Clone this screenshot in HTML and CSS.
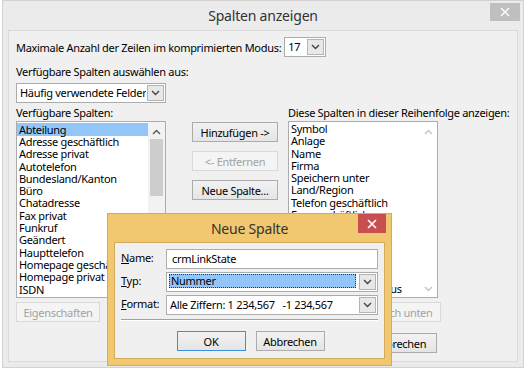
FILE: index.html
```html
<!DOCTYPE html>
<html lang="de">
<head>
    <meta charset="UTF-8">
    <title>Spalten anzeigen</title>
    <link rel="stylesheet" href="styles.css">
</head>
<body>
    <div class="window">
        <div class="titlebar">
            <span class="title">Spalten anzeigen</span>
            <span class="win-close">
                <svg width="10" height="10" viewBox="0 0 10 10"><path d="M1 1L9 9M9 1L1 9" stroke="#fff" stroke-width="1.4"/></svg>
            </span>
        </div>
        <div class="client">
            <div class="row-max">
                <span>Maximale Anzahl der Zeilen im komprimierten Modus:</span>
                <div class="combo combo-small">
                    <span class="combo-text">17</span>
                    <span class="combo-btn"><svg width="9" height="6" viewBox="0 0 9 6"><path d="M1 1l3.5 3.5L8 1" stroke="#444" stroke-width="1.4" fill="none"/></svg></span>
                </div>
            </div>
            <div class="label label-source">Verfügbare Spalten auswählen aus:</div>
            <div class="combo combo-source">
                <span class="combo-text">Häufig verwendete Felder</span>
                <span class="combo-btn"><svg width="9" height="6" viewBox="0 0 9 6"><path d="M1 1l3.5 3.5L8 1" stroke="#444" stroke-width="1.4" fill="none"/></svg></span>
            </div>

            <div class="columns">
                <div class="col-left">
                    <div class="label">Verfügbare Spalten:</div>
                    <div class="listbox">
                        <ul class="items">
                            <li class="sel">Abteilung</li>
                            <li>Adresse geschäftlich</li>
                            <li>Adresse privat</li>
                            <li>Autotelefon</li>
                            <li>Bundesland/Kanton</li>
                            <li>Büro</li>
                            <li>Chatadresse</li>
                            <li>Fax privat</li>
                            <li>Funkruf</li>
                            <li>Geändert</li>
                            <li>Haupttelefon</li>
                            <li>Homepage geschäftlich</li>
                            <li>Homepage privat</li>
                            <li>ISDN</li>
                        </ul>
                        <div class="scroll">
                            <svg class="arrow" width="9" height="6" viewBox="0 0 9 6"><path d="M1 5l3.5-3.5L8 5" stroke="#555" stroke-width="1.4" fill="none"/></svg>
                            <div class="thumb"></div>
                        </div>
                    </div>
                    <button class="btn off btn-props">Eigenschaften</button>
                </div>

                <div class="col-mid">
                    <button class="btn">Hinzufügen -&gt;</button>
                    <button class="btn off">&lt;- Entfernen</button>
                    <button class="btn btn-new">Neue Spalte...</button>
                </div>

                <div class="col-right">
                    <div class="label label-wide">Diese Spalten in dieser Reihenfolge anzeigen:</div>
                    <div class="listbox listbox-right">
                        <ul class="items">
                            <li>Symbol</li>
                            <li>Anlage</li>
                            <li>Name</li>
                            <li>Firma</li>
                            <li>Speichern unter</li>
                            <li>Land/Region</li>
                            <li>Telefon geschäftlich</li>
                            <li>Fax geschäftlich</li>
                            <li>Telefon privat</li>
                            <li>Mobiltelefon</li>
                            <li>Kategorien</li>
                            <li>E-Mail</li>
                            <li>Erstellt</li>
                            <li>Kennzeichnungsstatus</li>
                        </ul>
                        <div class="scroll scroll-off">
                            <svg class="arrow" width="9" height="6" viewBox="0 0 9 6"><path d="M1 5l3.5-3.5L8 5" stroke="#c4c4c4" stroke-width="1.4" fill="none"/></svg>
                            <svg class="arrow" width="9" height="6" viewBox="0 0 9 6"><path d="M1 1l3.5 3.5L8 1" stroke="#c4c4c4" stroke-width="1.4" fill="none"/></svg>
                        </div>
                    </div>
                    <div class="btn-row">
                        <button class="btn off btn-move">Nach oben</button>
                        <button class="btn off btn-move">Nach unten</button>
                    </div>
                    <div class="btn-row btn-row-end">
                        <button class="btn btn-move">OK</button>
                        <button class="btn btn-move">Abbrechen</button>
                    </div>
                </div>
            </div>
        </div>

        <div class="modal">
            <div class="modal-bar">
                <span class="modal-title">Neue Spalte</span>
                <span class="modal-close">
                    <svg width="10" height="10" viewBox="0 0 10 10"><path d="M1 1L9 9M9 1L1 9" stroke="#fff" stroke-width="1.6"/></svg>
                </span>
            </div>
            <div class="modal-client">
                <div class="form">
                    <span class="f-label"><u>N</u>ame:</span>
                    <div class="field">crmLinkState</div>
                    <span class="f-label"><u>T</u>yp:</span>
                    <div class="combo">
                        <span class="combo-text"><span class="picked">Nummer</span></span>
                        <span class="combo-btn"><svg width="9" height="6" viewBox="0 0 9 6"><path d="M1 1l3.5 3.5L8 1" stroke="#444" stroke-width="1.4" fill="none"/></svg></span>
                    </div>
                    <span class="f-label"><u>F</u>ormat:</span>
                    <div class="combo">
                        <span class="combo-text">Alle Ziffern: 1 234,567&nbsp;&nbsp;&nbsp;-1 234,567</span>
                        <span class="combo-btn"><svg width="9" height="6" viewBox="0 0 9 6"><path d="M1 1l3.5 3.5L8 1" stroke="#444" stroke-width="1.4" fill="none"/></svg></span>
                    </div>
                </div>
                <div class="sep"></div>
                <div class="modal-buttons">
                    <button class="btn btn-ok">OK</button>
                    <button class="btn btn-dlg">Abbrechen</button>
                </div>
            </div>
        </div>
    </div>
</body>
</html>
```

FILE: styles.css
```css
* {
    box-sizing: border-box;
}
body {
    margin: 0;
    background: #fff;
    font-family: "Noto Sans", sans-serif;
    font-size: 11px;
    letter-spacing: -0.3px;
    color: #000;
}
.window {
    position: relative;
    margin-left: 2px;
    width: 522px;
    height: 368px;
    background: #ebebeb;
    border: 1px solid #d2d2d2;
    display: flex;
    flex-direction: column;
}
.titlebar {
    height: 29px;
    display: grid;
    grid-template-columns: 1fr auto 1fr;
    align-items: center;
}
.title {
    grid-column: 2;
    font-size: 14px;
    letter-spacing: -0.2px;
    color: #333;
}
.win-close {
    justify-self: end;
    align-self: start;
    margin: 2px 3px 0 0;
    width: 30px;
    height: 18px;
    background: #bfbfbf;
    display: flex;
    align-items: center;
    justify-content: center;
}
.client {
    flex: 1;
    margin: 0 5px 5px;
    background: #f0f0f0;
    border: 1px solid #dadada;
    padding: 6px 7px;
}
.row-max {
    display: flex;
    align-items: center;
    gap: 3px;
}
.label {
    line-height: 14px;
}
.label-wide {
    white-space: nowrap;
}
.label-source {
    margin-top: 8px;
}
.combo {
    display: flex;
    height: 20px;
    border: 1px solid #acacac;
    background: #fff;
}
.combo-small {
    width: 42px;
}
.combo-source {
    width: 150px;
    margin-top: 4px;
}
.combo-text {
    flex: 1;
    padding: 0 3px;
    line-height: 18px;
    white-space: nowrap;
    overflow: hidden;
}
.combo-btn {
    width: 17px;
    margin: 1px;
    border: 1px solid #b4b4b4;
    background: #e8e8e8;
    display: flex;
    align-items: center;
    justify-content: center;
}
.columns {
    display: flex;
    margin-top: 3px;
}
.col-left {
    width: 150px;
}
.col-mid {
    width: 86px;
    margin-left: 26px;
    padding-top: 16px;
    display: flex;
    flex-direction: column;
}
.col-mid .btn + .btn {
    margin-top: 9px;
}
.col-mid .btn-new {
    margin-top: 15px;
}
.col-right {
    width: 153px;
    margin-left: 10px;
}
.listbox {
    display: flex;
    width: 150px;
    height: 177px;
    margin-top: 1px;
    border: 1px solid #acacac;
    background: #fff;
    overflow: hidden;
}
.items {
    flex: 1;
    list-style: none;
    margin: 0;
    padding: 1px 0 0 0;
}
.items li {
    height: 12.3px;
    line-height: 12.3px;
    padding-left: 2px;
    white-space: nowrap;
}
.items li.sel {
    background: #92c6f8;
    height: 13px;
    line-height: 13px;
}
.scroll {
    width: 17px;
    background: #f2f2f2;
    display: flex;
    flex-direction: column;
    align-items: center;
    padding-top: 7px;
}
.scroll .thumb {
    width: 13px;
    height: 57px;
    margin-top: 4px;
    background: #cdcdcd;
}
.scroll-off {
    background: #fff;
    justify-content: space-between;
    padding: 7px 0 5px;
}
.btn {
    height: 20px;
    padding: 0;
    border: 1px solid #acacac;
    background: linear-gradient(#f2f2f2, #e5e5e5);
    font: inherit;
    letter-spacing: inherit;
    color: #000;
    white-space: nowrap;
}
.btn.off {
    border-color: #d9d9d9;
    background: #f4f4f4;
    color: #a2a2a2;
}
.btn-props {
    width: 84px;
    margin-top: 4px;
}
.btn-row {
    display: flex;
    justify-content: space-between;
    margin-top: 4px;
}
.btn-row-end {
    width: 154px;
    margin-top: 11px;
    margin-left: -5px;
}
.btn-move {
    width: 74px;
}
.btn-row-end .btn-move {
    width: 75px;
}

/* Neue Spalte dialog */
.modal {
    position: absolute;
    left: 104px;
    top: 212px;
    width: 285px;
    height: 153px;
    background: #f1c86f;
    border: 1px solid #dcaa48;
    display: flex;
    flex-direction: column;
}
.modal-bar {
    height: 28px;
    display: grid;
    grid-template-columns: 1fr auto 1fr;
    align-items: center;
}
.modal-title {
    grid-column: 2;
    font-size: 14px;
    letter-spacing: -0.2px;
    color: #333;
}
.modal-close {
    justify-self: end;
    align-self: start;
    margin-right: 5px;
    width: 28px;
    height: 19px;
    background: #c74f4f;
    display: flex;
    align-items: center;
    justify-content: center;
}
.modal-client {
    flex: 1;
    margin: 0 6px 6px 6px;
    background: #f0f0f0;
    border: 1px solid #d3ab5a;
    padding: 6px 4px 0 6px;
}
.form {
    display: grid;
    grid-template-columns: 45px 212px;
    row-gap: 3px;
    align-items: center;
}
.f-label {
    line-height: 14px;
    margin-top: -2px;
}
.field {
    height: 20px;
    border: 1px solid #acacac;
    background: #fff;
    padding: 0 5px;
    line-height: 18px;
}
.picked {
    display: block;
    margin: 1px -1px 1px -1px;
    padding: 0 2px;
    line-height: 14px;
    background: #92c6f8;
    outline: 1px dotted #333;
    outline-offset: -1px;
}
.sep {
    height: 2px;
    margin: 4px 2px 0 0;
    border-top: 1px solid #a0a0a0;
    border-bottom: 1px solid #fff;
}
.modal-buttons {
    display: flex;
    justify-content: center;
    gap: 10px;
    margin-top: 10px;
}
.btn-ok,
.btn-dlg {
    width: 69px;
}
.btn-ok {
    border-color: #3c8fde;
}
```
